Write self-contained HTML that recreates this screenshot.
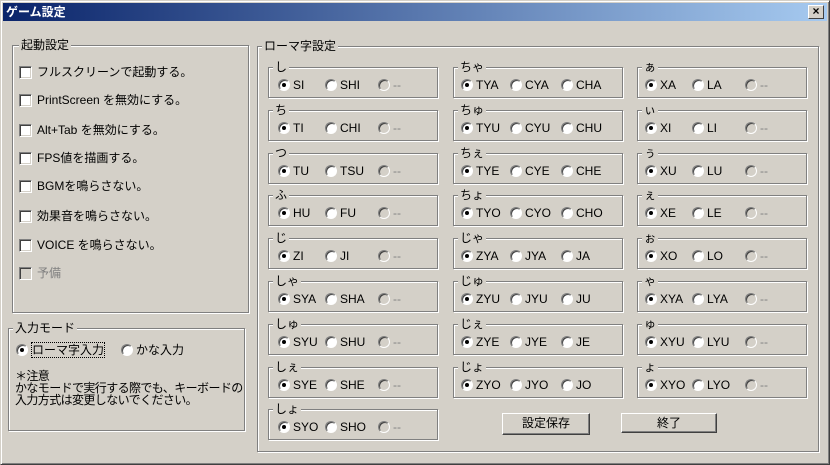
<!DOCTYPE html>
<html><head><meta charset="utf-8"><style>
*{margin:0;padding:0;box-sizing:border-box}
body{width:830px;height:465px;background:#d4d0c8;font-family:"Liberation Sans","Noto Sans CJK JP",sans-serif;font-size:12px;color:#000;position:relative;overflow:hidden}
.win{position:absolute;left:0;top:0;width:830px;height:465px;border:1px solid;border-color:#d4d0c8 #404040 #404040 #d4d0c8;box-shadow:inset 1px 1px #fff,inset -1px -1px #808080}
.title{position:absolute;left:3px;top:3px;width:824px;height:18px;background:linear-gradient(90deg,#0a246a,#a6caf0);color:#fff;font-weight:bold;font-size:12px;line-height:18px;padding-left:3px}
.x{position:absolute;right:6px;top:5px;width:16px;height:14px;background:#d4d0c8;border:1px solid;border-color:#fff #404040 #404040 #fff;font-size:12px;line-height:11px;text-align:center;font-weight:bold;color:#000}
.g{position:absolute;border:1px solid #808080;box-shadow:1px 1px #fff,inset 1px 1px #fff}
.g>.l{position:absolute;top:-8px;left:6px;background:#d4d0c8;padding:0 2px;line-height:14px;white-space:nowrap}
.t{position:absolute;white-space:nowrap;line-height:14px}
.cb{position:absolute;width:13px;height:13px;background:#fff;border:1px solid;border-color:#808080 #fff #fff #808080;box-shadow:inset 1px 1px #404040,inset -1px -1px #d4d0c8}
.r{position:absolute;width:12px;height:12px;border-radius:50%;background:#fff;border:1px solid;border-color:#808080 #fff #fff #808080;box-shadow:inset 1px 1px #404040}
.r.on::after{content:"";position:absolute;left:3px;top:3px;width:4px;height:4px;border-radius:50%;background:#000}
.r.dis{background:#d4d0c8}
.dis{color:#808080}
.btn{position:absolute;background:#d4d0c8;border:1px solid;border-color:#fff #404040 #404040 #fff;box-shadow:inset -1px -1px #808080;text-align:center;line-height:19px}
</style></head><body>
<div class="win"></div>
<div class="title">ゲーム設定</div>
<div class="x">×</div>

<div class="g" style="left:12px;top:45px;width:237px;height:268px"><span class="l">起動設定</span></div>
<div class="cb" style="left:19px;top:66px"></div><div class="t" style="left:37px;top:65px">フルスクリーンで起動する。</div>
<div class="cb" style="left:19px;top:94px"></div><div class="t" style="left:37px;top:93px">PrintScreen を無効にする。</div>
<div class="cb" style="left:19px;top:124px"></div><div class="t" style="left:37px;top:123px">Alt+Tab を無効にする。</div>
<div class="cb" style="left:19px;top:152px"></div><div class="t" style="left:37px;top:151px">FPS値を描画する。</div>
<div class="cb" style="left:19px;top:180px"></div><div class="t" style="left:37px;top:179px">BGMを鳴らさない。</div>
<div class="cb" style="left:19px;top:210px"></div><div class="t" style="left:37px;top:209px">効果音を鳴らさない。</div>
<div class="cb" style="left:19px;top:239px"></div><div class="t" style="left:37px;top:238px">VOICE を鳴らさない。</div>
<div class="cb" style="left:19px;top:267px;background:#d4d0c8"></div><div class="t dis" style="left:37px;top:266px">予備</div>

<div class="g" style="left:8px;top:328px;width:237px;height:103px"><span class="l" style="left:4px">入力モード</span></div>
<div class="r on" style="left:16px;top:344px"></div><div class="t" style="left:32px;top:343px;outline:1px dotted #000">ローマ字入力</div>
<div class="r" style="left:121px;top:344px"></div><div class="t" style="left:136px;top:343px">かな入力</div>
<div class="t" style="left:15px;top:370px;line-height:12px;letter-spacing:-0.6px">＊注意<br>かなモードで実行する際でも、キーボードの<br>入力方式は変更しないでください。</div>

<div class="g" style="left:257px;top:46px;width:562px;height:406px"><span class="l" style="left:4px">ローマ字設定</span></div>

<div id="subs"></div>
<script>
var cols=[
[["し","SI","SHI"],["ち","TI","CHI"],["つ","TU","TSU"],["ふ","HU","FU"],["じ","ZI","JI"],["しゃ","SYA","SHA"],["しゅ","SYU","SHU"],["しぇ","SYE","SHE"],["しょ","SYO","SHO"]],
[["ちゃ","TYA","CYA","CHA"],["ちゅ","TYU","CYU","CHU"],["ちぇ","TYE","CYE","CHE"],["ちょ","TYO","CYO","CHO"],["じゃ","ZYA","JYA","JA"],["じゅ","ZYU","JYU","JU"],["じぇ","ZYE","JYE","JE"],["じょ","ZYO","JYO","JO"]],
[["ぁ","XA","LA"],["ぃ","XI","LI"],["ぅ","XU","LU"],["ぇ","XE","LE"],["ぉ","XO","LO"],["ゃ","XYA","LYA"],["ゅ","XYU","LYU"],["ょ","XYO","LYO"]]];
var xs=[268,453,637],rx=[[10,57,110],[8,57,108],[8,55,108]],h="";
cols.forEach(function(c,ci){c.forEach(function(it,ri){var x=xs[ci],y=67+ri*42.8;
h+='<div class="g" style="left:'+x+'px;top:'+y+'px;width:170px;height:31px"><span class="l" style="left:4px">'+it[0]+'</span></div>';
for(var k=0;k<3;k++){var lab=it[k+1]||"--",dis=!it[k+1];var px=x+rx[ci][k];
h+='<div class="r'+(k==0?' on':'')+(dis?' dis':'')+'" style="left:'+px+'px;top:'+(y+12)+'px"></div><div class="t'+(dis?' dis':'')+'" style="left:'+(px+15)+'px;top:'+(y+11)+'px">'+lab+'</div>';}
});});
document.getElementById("subs").innerHTML=h;
</script>
<div class="btn" style="left:502px;top:413px;width:88px;height:22px">設定保存</div>
<div class="btn" style="left:621px;top:413px;width:96px;height:20px">終了</div>
</body></html>
